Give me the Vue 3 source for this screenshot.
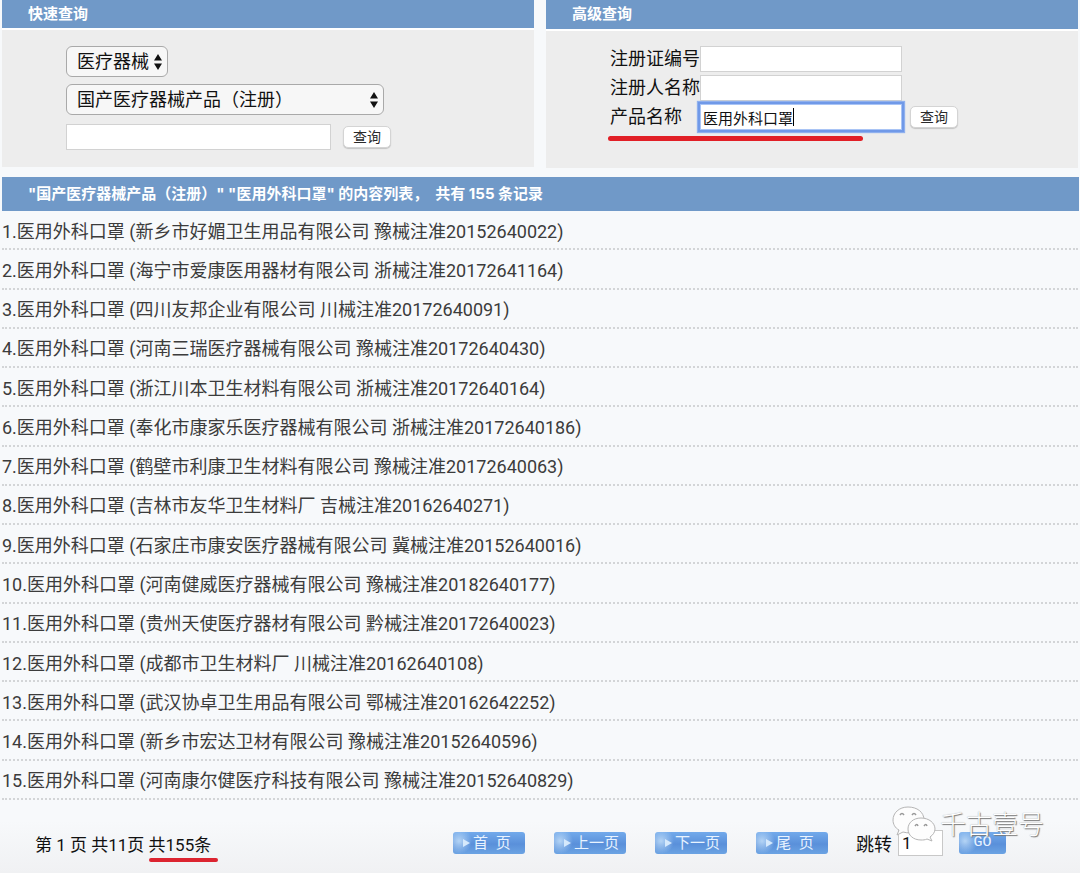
<script setup>
import { ref } from 'vue'

const category = ref('医疗器械')
const kind = ref('国产医疗器械产品（注册）')
const quick = ref('')
const certNo = ref('')
const holder = ref('')
const product = ref('医用外科口罩')
const page = ref('1')

const rows = [
  ['新乡市好媚卫生用品有限公司', '豫械注准20152640022'],
  ['海宁市爱康医用器材有限公司', '浙械注准20172641164'],
  ['四川友邦企业有限公司', '川械注准20172640091'],
  ['河南三瑞医疗器械有限公司', '豫械注准20172640430'],
  ['浙江川本卫生材料有限公司', '浙械注准20172640164'],
  ['奉化市康家乐医疗器械有限公司', '浙械注准20172640186'],
  ['鹤壁市利康卫生材料有限公司', '豫械注准20172640063'],
  ['吉林市友华卫生材料厂', '吉械注准20162640271'],
  ['石家庄市康安医疗器械有限公司', '冀械注准20152640016'],
  ['河南健威医疗器械有限公司', '豫械注准20182640177'],
  ['贵州天使医疗器材有限公司', '黔械注准20172640023'],
  ['成都市卫生材料厂', '川械注准20162640108'],
  ['武汉协卓卫生用品有限公司', '鄂械注准20162642252'],
  ['新乡市宏达卫材有限公司', '豫械注准20152640596'],
  ['河南康尔健医疗科技有限公司', '豫械注准20152640829'],
]
const pagers = ['首\u2002页', '上一页', '下一页', '尾\u2002页']
</script>

<template>
  <main class="page">
    <div class="panels">
      <section class="panel">
        <h2 class="bar">快速查询</h2>
        <form class="body quick" @submit.prevent>
          <div class="pick short">
            <select v-model="category" aria-label="类别">
              <option>医疗器械</option>
            </select>
            <svg class="arrows" viewBox="0 0 8 16" aria-hidden="true"><path d="M4 0 8 6.5H0ZM4 16 0 9.5H8Z" /></svg>
          </div>
          <div class="pick long">
            <select v-model="kind" aria-label="数据库">
              <option>国产医疗器械产品（注册）</option>
            </select>
            <svg class="arrows" viewBox="0 0 8 16" aria-hidden="true"><path d="M4 0 8 6.5H0ZM4 16 0 9.5H8Z" /></svg>
          </div>
          <div class="line">
            <input v-model="quick" class="box wide" type="text" aria-label="关键词" />
            <button class="go-search" type="submit">查询</button>
          </div>
        </form>
      </section>

      <section class="panel">
        <h2 class="bar tall">高级查询</h2>
        <form class="body advanced" @submit.prevent>
          <div class="field">
            <label for="cert">注册证编号</label>
            <input id="cert" v-model="certNo" class="box" type="text" />
          </div>
          <div class="field">
            <label for="holder">注册人名称</label>
            <input id="holder" v-model="holder" class="box" type="text" />
          </div>
          <div class="field marked">
            <label for="product">产品名称</label>
            <span class="typing">
              <input id="product" v-model="product" class="box active" type="text" />
              <i class="caret"></i>
            </span>
            <button class="go-search" type="submit">查询</button>
          </div>
        </form>
      </section>
    </div>

    <h1 class="bar summary">"国产医疗器械产品（注册）" "医用外科口罩" 的内容列表， &nbsp;共有 155 条记录</h1>

    <ul class="list">
      <li v-for="(row, i) in rows" :key="row[1]">
        <a href="#">{{ i + 1 }}.医用外科口罩 ({{ row[0] }} {{ row[1] }})</a>
      </li>
    </ul>

    <footer class="foot">
      <p class="count">第 1 页 共11页 <span class="total">共155条</span></p>
      <nav class="pager">
        <button v-for="p in pagers" :key="p" class="chip" type="button">
          <svg class="tri" viewBox="0 0 7 8" aria-hidden="true"><path d="M0 0 7 4 0 8Z" /></svg>
          <span>{{ p }}</span>
        </button>
      </nav>
      <form class="jump" @submit.prevent>
        <label for="page">跳转</label>
        <input id="page" v-model="page" type="text" />
        <button class="chip go" type="submit">GO</button>
        <div class="mark">
          <svg viewBox="0 0 46 40" aria-hidden="true">
            <path class="bubble" d="M17 2C8 2 2 8 2 15c0 4 2 8 6 10l-2 5 6-3c10 3 21-2 21-12C33 7 26 2 17 2Z" />
            <path class="bubble" d="M30 13c-8 0-13 5-13 11s5 11 13 11c2 0 4 0 6-1l5 2-2-4c3-2 5-5 5-8 0-6-6-11-14-11Z" />
            <path class="eye" d="M9 10q2-3 4 0M21 10q2-3 4 0M24 21q2-3 3 0M33 21q2-3 3 0" />
          </svg>
          <span>千古壹号</span>
        </div>
      </form>
    </footer>
  </main>
</template>

<style>
body {
  margin: 0;
  background: #f7f9fb;
}
</style>

<style scoped>
.page {
  box-sizing: border-box;
  min-height: 100vh;
  background: linear-gradient(to bottom, #f7f9fb 0, #f7f9fb 94%, #f0f1f3 100%);
  font-family: Roboto, "Noto Sans CJK SC", sans-serif;
  font-size: 18px;
  color: #111;
  display: flex;
  flex-direction: column;
}
input, select, button {
  box-sizing: border-box;
  margin: 0;
  font-family: inherit;
  color: inherit;
}
.panels {
  display: grid;
  grid-template-columns: 1fr 1fr;
  gap: 12px;
  padding: 0 2px;
  align-items: start;
}
.bar {
  margin: 0;
  padding: 0 26px;
  height: 28px;
  line-height: 28px;
  background: #7099c8;
  color: #fff;
  font-family: Inter, "Noto Sans CJK SC", sans-serif;
  font-size: 15px;
  font-weight: 700;
}
.bar.tall { height: 29px; }
.body {
  box-sizing: border-box;
  height: 139px;
  border-top: 2px solid #fff;
  background: #ededed;
}
.quick {
  display: flex;
  flex-direction: column;
  align-items: flex-start;
  padding: 16px 64px;
}
.pick {
  display: grid;
  margin-bottom: 7px;
}
.short { width: 102px; }
.long { width: 318px; }
.pick > * { grid-area: 1 / 1; }
select {
  appearance: none;
  width: 100%;
  height: 31px;
  padding: 0 10px;
  border: 1px solid #a9a9a9;
  border-radius: 6px;
  background: #f7f7f7;
  font-size: 18px;
}
.arrows {
  width: 8px;
  height: 16px;
  margin-right: 6px;
  place-self: center end;
  pointer-events: none;
  fill: #111;
}
.line {
  display: flex;
  align-items: center;
  gap: 12px;
  margin-top: 2px;
}
.box {
  width: 202px;
  height: 26px;
  padding: 0 2px;
  border: 1px solid #d2d2d2;
  border-radius: 0;
  background: #fff;
  font-size: 15px;
  outline: none;
}
.box.wide { width: 265px; }
.go-search {
  width: 48px;
  height: 22px;
  padding: 0;
  border: 1px solid #d4d4d4;
  border-radius: 5px;
  background: #fff;
  box-shadow: 0 1px 1px #c4c4c4;
  color: #2a2a2a;
  font-size: 14px;
  line-height: 20px;
}
.advanced {
  padding: 15px 64px;
  display: flex;
  flex-direction: column;
  gap: 3px;
}
.field {
  position: relative;
  display: flex;
  align-items: center;
  height: 26px;
}
.field label {
  flex: none;
  width: 90px;
  line-height: 26px;
}
.typing {
  position: relative;
  display: flex;
}
.active {
  border-color: #a9c4f5;
  box-shadow: 0 0 0 2px #7099e8, 0 0 1px 3px #8fb0ee;
}
.caret {
  position: absolute;
  left: 93px;
  top: 4px;
  width: 1px;
  height: 18px;
  background: #000;
}
.marked .go-search { margin-left: 8px; }
.marked::after {
  content: "";
  position: absolute;
  left: -2px;
  top: 32px;
  width: 255px;
  height: 5px;
  border-radius: 3px;
  background: #e11f26;
}
.bar.summary {
  height: 34px;
  line-height: 34px;
  margin: 9px 1px 0 2px;
}
.list {
  flex: 1;
  display: grid;
  grid-auto-rows: 1fr;
  margin: 0;
  padding: 0 2px;
  list-style: none;
}
.list li {
  display: flex;
  align-items: center;
  min-height: 36px;
  border-bottom: 2px dotted #d3d5d7;
}
.list a {
  color: #3c3c3c;
  text-decoration: none;
}
.foot {
  display: flex;
  align-items: center;
  padding-left: 35px;
  margin: 30px 0 17px;
  height: 26px;
}
.count {
  flex: none;
  width: 418px;
  margin: 0;
  font-size: 17px;
}
.total {
  position: relative;
}
.total::after {
  content: "";
  position: absolute;
  left: 0;
  right: -7px;
  bottom: -7px;
  height: 4px;
  border-radius: 2px;
  background: #dc2430;
}
.pager {
  display: flex;
  gap: 29px;
}
.chip {
  display: flex;
  align-items: center;
  gap: 3px;
  width: 72px;
  height: 22px;
  padding: 0 0 0 10px;
  border: 0;
  border-radius: 3px;
  background:
    radial-gradient(circle at 6px 9px, #b4d4f5 0, transparent 13px),
    linear-gradient(to bottom, #72aaeb, #5a90da 55%, #6ba3e3);
  color: #e8f3ff;
  font-size: 15px;
  line-height: 22px;
  white-space: nowrap;
}
.chip.go {
  justify-content: center;
  width: 47px;
  margin-left: 16px;
  padding: 0;
  font-family: "Liberation Mono", monospace;
  font-size: 15px;
}
.tri {
  width: 7px;
  height: 8px;
  fill: #d5e9fc;
}
.jump {
  position: relative;
  display: flex;
  align-items: center;
  margin-left: 28px;
}
.jump input {
  width: 45px;
  height: 26px;
  margin-left: 6px;
  padding: 0 3px;
  border: 1px solid #c8c8c8;
  background: #fff;
  font-size: 17px;
}
.mark {
  position: absolute;
  left: 35px;
  top: -25px;
  display: flex;
  align-items: center;
  gap: 3px;
  white-space: nowrap;
  color: #fff;
  font-size: 26px;
  font-weight: 300;
  line-height: 38px;
  text-shadow: 1px 1px 1px #777, 0 0 1px #999;
  pointer-events: none;
}
.mark svg {
  width: 46px;
  height: 40px;
}
.bubble {
  fill: #fdfdfd;
  stroke: #b5b5b5;
  stroke-width: 1;
}
.eye {
  fill: none;
  stroke: #999;
  stroke-width: 1.5;
}
</style>
